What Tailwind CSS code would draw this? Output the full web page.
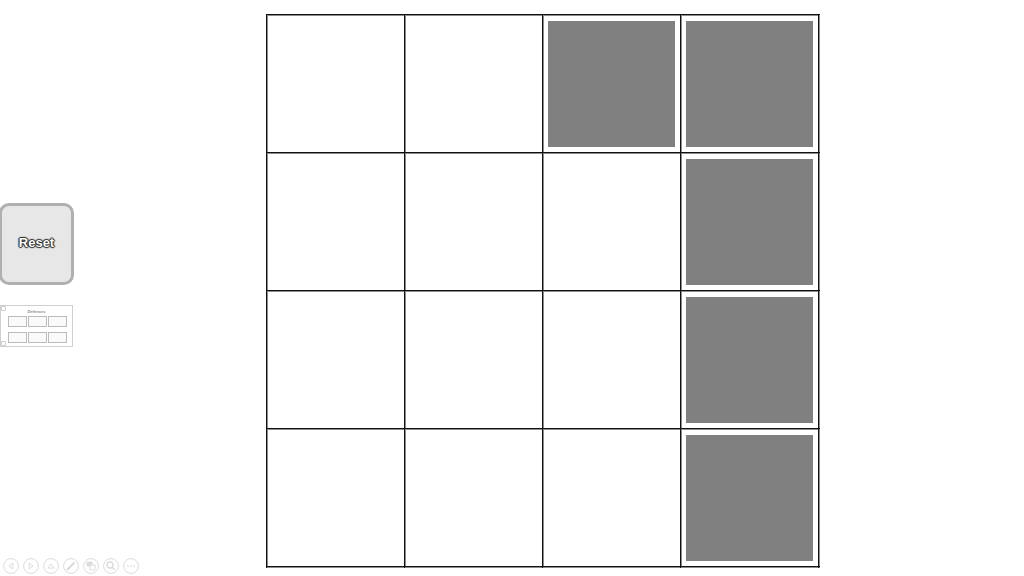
<!DOCTYPE html>
<html><head><meta charset="utf-8"><title>Grid</title>
<script src="https://cdn.jsdelivr.net/npm/@tailwindcss/browser@4"></script></head>
<body class="bg-white">
<div class="relative flex w-[1024px] h-[576px] overflow-hidden bg-white font-['Liberation_Sans',sans-serif]">
  <div class="w-[266px] shrink-0 pt-[203px] flex flex-col">
    <div class="w-[75px] h-[82px] rounded-[10px] border-[3px] border-[#b0b0b0] bg-[#e7e7e7] -ml-px flex items-center justify-center">
      <span class="text-[13px] font-bold text-white -translate-y-px [text-shadow:0_0_1px_#222,0_0_1.5px_#222,1px_0_1px_#333,-1px_0_1px_#333,0_1px_1px_#333,0_-1px_1px_#333]">Reset</span>
    </div>
    <div class="relative mt-[20px] w-[73px] h-[42px] border border-[#cfcfcf] bg-white flex flex-col items-center pt-[3px]">
      <span class="text-[4px] leading-[5px] italic font-bold text-[#888]">Defenses</span>
      <div class="grid grid-cols-3 gap-x-[1px] gap-y-[5px] mt-[2px] ml-[2px]">
        <div class="w-[19px] h-[11px] border border-[#bbb] bg-[#fafafa]"></div><div class="w-[19px] h-[11px] border border-[#bbb] bg-[#fafafa]"></div><div class="w-[19px] h-[11px] border border-[#bbb] bg-[#fafafa]"></div>
        <div class="w-[19px] h-[11px] border border-[#bbb] bg-[#fafafa]"></div><div class="w-[19px] h-[11px] border border-[#bbb] bg-[#fafafa]"></div><div class="w-[19px] h-[11px] border border-[#bbb] bg-[#fafafa]"></div>
      </div>
      <div class="absolute left-0 top-0 w-[5px] h-[5px] border border-[#ccc] rounded-[1px]"></div>
      <div class="absolute left-0 bottom-0 w-[5px] h-[5px] border border-[#ccc] rounded-[1px]"></div>
    </div>
  </div>
  <div class="mt-[14px] w-[554px] h-[554px] p-[2px] grid grid-cols-[repeat(4,136px)] grid-rows-[repeat(4,136px)] gap-[2px] bg-[repeating-linear-gradient(90deg,#111_0,#111_1px,transparent_1px,transparent_138px),repeating-linear-gradient(180deg,#111_0,#111_1px,#8c8c8c_1px,#8c8c8c_2px,#8c8c8c_2px,#8c8c8c_138px)] self-start">
    <div class="bg-white"></div>
    <div class="bg-white"></div>
    <div class="bg-white pl-[4px] pr-[5px] py-[5px]"><div class="w-full h-full bg-[#808080]"></div></div>
    <div class="bg-white pl-[4px] pr-[5px] py-[5px]"><div class="w-full h-full bg-[#808080]"></div></div>
    <div class="bg-white"></div>
    <div class="bg-white"></div>
    <div class="bg-white"></div>
    <div class="bg-white pl-[4px] pr-[5px] py-[5px]"><div class="w-full h-full bg-[#808080]"></div></div>
    <div class="bg-white"></div>
    <div class="bg-white"></div>
    <div class="bg-white"></div>
    <div class="bg-white pl-[4px] pr-[5px] py-[5px]"><div class="w-full h-full bg-[#808080]"></div></div>
    <div class="bg-white"></div>
    <div class="bg-white"></div>
    <div class="bg-white"></div>
    <div class="bg-white pl-[4px] pr-[5px] py-[5px]"><div class="w-full h-full bg-[#808080]"></div></div>
  </div>
  <div class="absolute left-[3px] top-[558px] flex gap-[4px] text-[#dcdcdc]">
    <svg class="w-[16px] h-[16px]" viewBox="0 0 16 16" fill="none" stroke="currentColor"><circle cx="8" cy="8" r="7.4"/><path d="M9.8 5 6 8l3.8 3z"/></svg>
    <svg class="w-[16px] h-[16px]" viewBox="0 0 16 16" fill="none" stroke="currentColor"><circle cx="8" cy="8" r="7.4"/><path d="M6.2 5 10 8l-3.8 3z"/></svg>
    <svg class="w-[16px] h-[16px]" viewBox="0 0 16 16" fill="none" stroke="currentColor"><circle cx="8" cy="8" r="7.4"/><path d="M5 10h6L8 6z"/></svg>
    <svg class="w-[16px] h-[16px]" viewBox="0 0 16 16" fill="none" stroke="currentColor"><circle cx="8" cy="8" r="7.4"/><path d="M4 12 11.5 4.5" stroke-width="2.4"/></svg>
    <svg class="w-[16px] h-[16px]" viewBox="0 0 16 16" fill="none" stroke="currentColor"><circle cx="8" cy="8" r="7.4"/><path d="M4 4h5v4H4z" fill="currentColor"/><path d="M7 7h5v5H7z" fill="#fff"/></svg>
    <svg class="w-[16px] h-[16px]" viewBox="0 0 16 16" fill="none" stroke="currentColor"><circle cx="8" cy="8" r="7.4"/><circle cx="7" cy="7" r="3" stroke-width="1.4"/><path d="m9.2 9.2 2.6 2.6" stroke-width="1.6"/></svg>
    <svg class="w-[16px] h-[16px]" viewBox="0 0 16 16" fill="none" stroke="currentColor"><circle cx="8" cy="8" r="7.4"/><path d="M4.2 8h1.4M7.3 8h1.4M10.4 8h1.4" stroke-width="1.6"/></svg>
  </div>
</div>
</body></html>
